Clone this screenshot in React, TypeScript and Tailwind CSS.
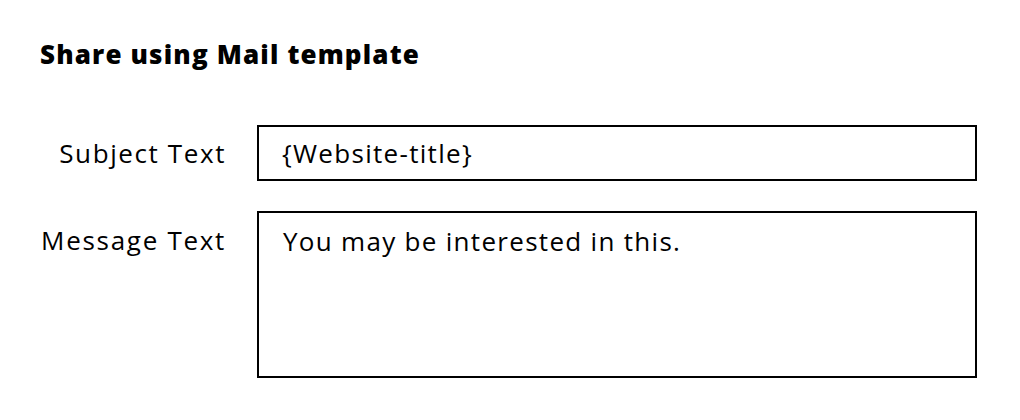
import React from "react";

export default function App() {
  return (
    <div className="w-[1020px] h-[420px] bg-white text-black pl-[40px] pt-[38px]" style={{ fontFamily: "'Open Sans', 'Noto Sans', sans-serif" }}>
      <h1 className="text-[26px] leading-[32px] font-extrabold tracking-[1.15px]">Share using Mail template</h1>
      <div className="mt-[55px] grid grid-cols-[186px_720px] gap-x-[31px] gap-y-[30px] tracking-[1.3px]">
        <div className="text-[26px] leading-[56px] text-right tracking-[1.6px]">Subject Text</div>
        <div className="h-[56px] border-2 border-black px-[23px] text-[26px] leading-[52px]">{"{Website-title}"}</div>
        <div className="text-[26px] leading-[30px] pt-[14px] text-right tracking-[1.7px]">Message Text</div>
        <div className="h-[167px] border-2 border-black px-[24px] pt-[13px] text-[26px] leading-[30px]">You may be interested in this.</div>
      </div>
    </div>
  );
}
